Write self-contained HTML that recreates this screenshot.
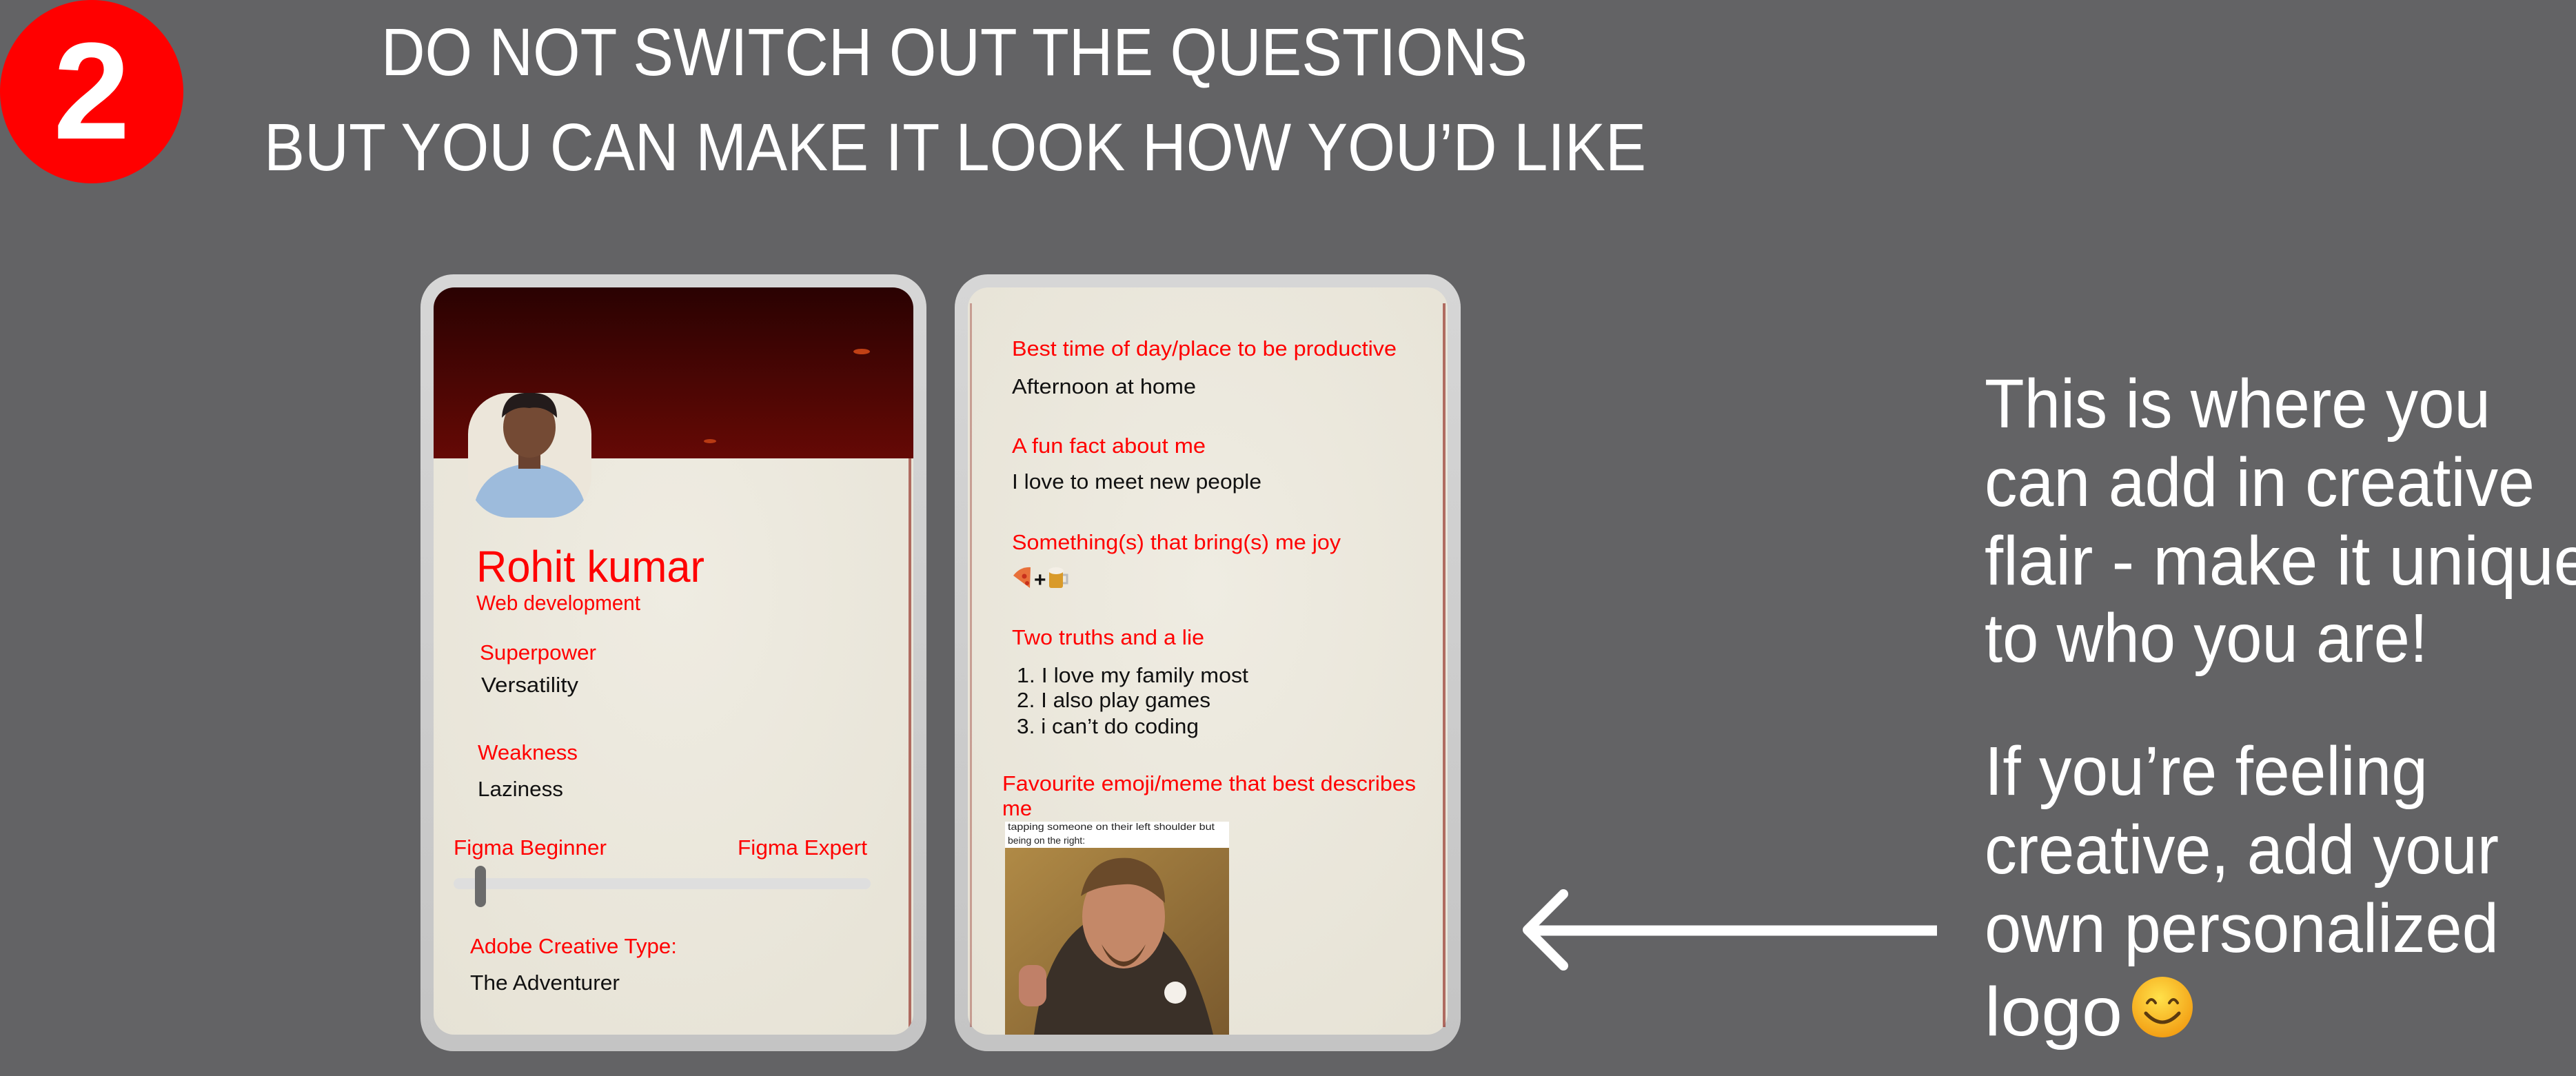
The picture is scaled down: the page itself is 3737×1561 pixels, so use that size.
<!DOCTYPE html>
<html><head><meta charset="utf-8"><style>
html,body{margin:0;padding:0;background:#636365;}
svg{display:block}
</style></head><body>
<svg width="3737" height="1561" viewBox="0 0 3737 1561" xmlns="http://www.w3.org/2000/svg" font-family="'Liberation Sans', sans-serif">
<defs>
<linearGradient id="hdr" x1="0" y1="0" x2="0" y2="1"><stop offset="0" stop-color="#2a0202"/><stop offset="1" stop-color="#650905"/></linearGradient>
<linearGradient id="outer" x1="0" y1="0" x2="0" y2="1"><stop offset="0" stop-color="#d6d6d6"/><stop offset="1" stop-color="#c4c4c4"/></linearGradient>
<radialGradient id="paper" cx="0.5" cy="0.4" r="0.8"><stop offset="0" stop-color="#efece2"/><stop offset="1" stop-color="#e6e2d5"/></radialGradient>
<radialGradient id="smile" cx="0.45" cy="0.35" r="0.7"><stop offset="0" stop-color="#ffe14a"/><stop offset="1" stop-color="#f29a10"/></radialGradient>
<linearGradient id="meme" x1="0" y1="0" x2="1" y2="1"><stop offset="0" stop-color="#b08a46"/><stop offset="1" stop-color="#7a5a2e"/></linearGradient>
<clipPath id="lc"><rect x="629" y="417" width="696" height="1084" rx="30"/></clipPath>
<clipPath id="ph"><rect x="679" y="570" width="179" height="181" rx="60"/></clipPath>
</defs>
<rect width="3737" height="1561" fill="#636365"/>
<!-- badge -->
<circle cx="133" cy="133" r="133" fill="#ff0000"/>
<text x="133" y="201" font-size="200" font-weight="bold" fill="#fff" text-anchor="middle">2</text>
<text x="553" y="109" font-size="97" fill="#fff" textLength="1663" lengthAdjust="spacingAndGlyphs">DO NOT SWITCH OUT THE QUESTIONS</text>
<text x="383" y="247" font-size="97" fill="#fff" textLength="2005" lengthAdjust="spacingAndGlyphs">BUT YOU CAN MAKE IT LOOK HOW YOU’D LIKE</text>

<!-- left card -->
<rect x="610" y="398" width="734" height="1127" rx="48" fill="url(#outer)"/>
<rect x="629" y="417" width="696" height="1084" rx="30" fill="url(#paper)"/>
<g clip-path="url(#lc)">
<rect x="629" y="417" width="696" height="248" fill="url(#hdr)"/>
<ellipse cx="1250" cy="510" rx="12" ry="4" fill="#e0501a" opacity=".8"/>
<ellipse cx="1340" cy="590" rx="10" ry="3" fill="#e0501a" opacity=".7"/>
<ellipse cx="1030" cy="640" rx="9" ry="3" fill="#e0501a" opacity=".7"/>
<rect x="1318" y="665" width="4" height="836" fill="#8a1a10" opacity=".6"/>
</g>
<g clip-path="url(#ph)">
<rect x="679" y="570" width="179" height="181" fill="#ece6da"/>
<path d="M685 751 Q690 680 768 672 Q846 680 852 751 Z" fill="#9dbbdc"/>
<rect x="752" y="650" width="32" height="30" fill="#6a4230"/>
<ellipse cx="768" cy="620" rx="38" ry="44" fill="#744a34"/>
<path d="M728 606 Q730 568 768 570 Q808 568 808 606 Q790 588 768 592 Q746 588 728 606Z" fill="#231b1b"/>
</g>
<text x="691" y="844" font-size="64" fill="#f00" textLength="331" lengthAdjust="spacingAndGlyphs">Rohit kumar</text>
<text x="691" y="885" font-size="31" fill="#f00" textLength="238" lengthAdjust="spacingAndGlyphs">Web development</text>
<text x="696" y="957" font-size="31" fill="#f00" textLength="169" lengthAdjust="spacingAndGlyphs">Superpower</text>
<text x="698" y="1004" font-size="31" fill="#111" textLength="141" lengthAdjust="spacingAndGlyphs">Versatility</text>
<text x="693" y="1102" font-size="31" fill="#f00" textLength="145" lengthAdjust="spacingAndGlyphs">Weakness</text>
<text x="693" y="1155" font-size="31" fill="#111" textLength="124" lengthAdjust="spacingAndGlyphs">Laziness</text>
<text x="658" y="1240" font-size="31" fill="#f00" textLength="222" lengthAdjust="spacingAndGlyphs">Figma Beginner</text>
<text x="1258" y="1240" font-size="31" fill="#f00" text-anchor="end" textLength="188" lengthAdjust="spacingAndGlyphs">Figma Expert</text>
<rect x="658" y="1274" width="605" height="16" rx="8" fill="#dedede"/>
<rect x="689" y="1256" width="16" height="60" rx="8" fill="#6b6b6b"/>
<text x="682" y="1383" font-size="31" fill="#f00" textLength="300" lengthAdjust="spacingAndGlyphs">Adobe Creative Type:</text>
<text x="682" y="1436" font-size="31" fill="#111" textLength="217" lengthAdjust="spacingAndGlyphs">The Adventurer</text>

<!-- right card -->
<rect x="1385" y="398" width="734" height="1127" rx="48" fill="url(#outer)"/>
<rect x="1404" y="417" width="696" height="1084" rx="30" fill="url(#paper)"/>
<rect x="2093" y="440" width="4" height="1050" fill="#8a1a10" opacity=".6"/>
<rect x="1407" y="440" width="3" height="1050" fill="#8a1a10" opacity=".35"/>
<text x="1468" y="516" font-size="31" fill="#f00" textLength="558" lengthAdjust="spacingAndGlyphs">Best time of day/place to be productive</text>
<text x="1468" y="571" font-size="31" fill="#111" textLength="267" lengthAdjust="spacingAndGlyphs">Afternoon at home</text>
<text x="1468" y="657" font-size="31" fill="#f00" textLength="281" lengthAdjust="spacingAndGlyphs">A fun fact about me</text>
<text x="1468" y="709" font-size="31" fill="#111" textLength="362" lengthAdjust="spacingAndGlyphs">I love to meet new people</text>
<text x="1468" y="797" font-size="31" fill="#f00" textLength="477" lengthAdjust="spacingAndGlyphs">Something(s) that bring(s) me joy</text>
<path d="M1470 835 Q1480 822 1495 823 L1494 853 Z" fill="#e8703a"/>
<circle cx="1486" cy="836" r="3.5" fill="#c8301c"/><circle cx="1490" cy="846" r="3" fill="#c8301c"/>
<text x="1500" y="851" font-size="30" font-weight="bold" fill="#111">+</text>
<rect x="1522" y="828" width="20" height="25" rx="3" fill="#d99a2a"/>
<ellipse cx="1532" cy="828" rx="11" ry="5" fill="#f4efe6"/>
<path d="M1542 834 h6 v12 h-6" fill="none" stroke="#bbb" stroke-width="3"/>
<text x="1468" y="935" font-size="31" fill="#f00" textLength="279" lengthAdjust="spacingAndGlyphs">Two truths and a lie</text>
<text x="1475" y="990" font-size="31" fill="#111" textLength="336" lengthAdjust="spacingAndGlyphs">1. I love my family most</text>
<text x="1475" y="1026" font-size="31" fill="#111" textLength="281" lengthAdjust="spacingAndGlyphs">2. I also play games</text>
<text x="1475" y="1064" font-size="31" fill="#111" textLength="264" lengthAdjust="spacingAndGlyphs">3. i can’t do coding</text>
<text x="1454" y="1147" font-size="31" fill="#f00" textLength="600" lengthAdjust="spacingAndGlyphs">Favourite emoji/meme that best describes</text>
<text x="1454" y="1183" font-size="31" fill="#f00">me</text>
<rect x="1458" y="1192" width="325" height="38" fill="#fff"/>
<text x="1462" y="1204" font-size="14" fill="#222" textLength="300" lengthAdjust="spacingAndGlyphs">tapping someone on their left shoulder but</text>
<text x="1462" y="1224" font-size="14" fill="#222">being on the right:</text>
<rect x="1458" y="1230" width="325" height="271" fill="url(#meme)"/>
<path d="M1500 1501 Q1520 1340 1620 1320 Q1720 1330 1760 1501 Z" fill="#3a3028"/>
<ellipse cx="1630" cy="1330" rx="60" ry="75" fill="#c48868"/>
<path d="M1568 1300 Q1580 1240 1640 1245 Q1690 1255 1690 1310 Q1660 1280 1630 1283 Q1590 1285 1568 1300Z" fill="#6a4a2a"/>
<path d="M1598 1370 Q1630 1420 1662 1370 Q1650 1400 1630 1402 Q1610 1400 1598 1370Z" fill="#5a3a22"/>
<circle cx="1705" cy="1440" r="16" fill="#f4f0ea"/>
<rect x="1478" y="1400" width="40" height="60" rx="15" fill="#c08068"/>

<!-- arrow -->
<line x1="2226" y1="1350" x2="2810" y2="1350" stroke="#fff" stroke-width="15"/>
<path d="M2268 1297 L2216 1349 L2268 1401" fill="none" stroke="#fff" stroke-width="14" stroke-linecap="round" stroke-linejoin="round"/>

<!-- right text -->
<g font-size="100" fill="#fff">
<text x="2879" y="620" textLength="734" lengthAdjust="spacingAndGlyphs">This is where you</text>
<text x="2879" y="734" textLength="798" lengthAdjust="spacingAndGlyphs">can add in creative</text>
<text x="2879" y="848" textLength="880" lengthAdjust="spacingAndGlyphs">flair - make it unique</text>
<text x="2879" y="960" textLength="643" lengthAdjust="spacingAndGlyphs">to who you are!</text>
<text x="2879" y="1153" textLength="643" lengthAdjust="spacingAndGlyphs">If you’re feeling</text>
<text x="2879" y="1267" textLength="746" lengthAdjust="spacingAndGlyphs">creative, add your</text>
<text x="2879" y="1381" textLength="746" lengthAdjust="spacingAndGlyphs">own personalized</text>
<text x="2879" y="1502" textLength="200" lengthAdjust="spacingAndGlyphs">logo</text>
</g>
<circle cx="3137" cy="1461" r="44" fill="url(#smile)"/>
<path d="M3115 1455 q6 -10 12 0 M3147 1455 q6 -10 12 0" fill="none" stroke="#5a3a10" stroke-width="4" stroke-linecap="round"/>
<path d="M3113 1470 q24 26 48 0" fill="none" stroke="#5a3a10" stroke-width="5" stroke-linecap="round"/>
</svg>
</body></html>
